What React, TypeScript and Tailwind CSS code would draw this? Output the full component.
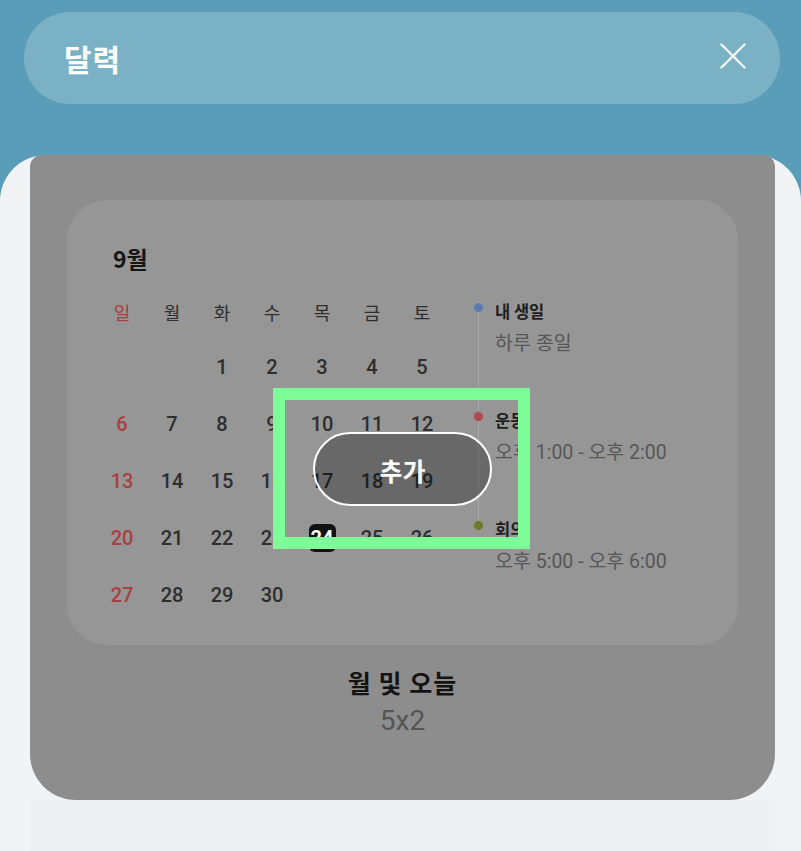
import React from "react";

const font = { fontFamily: '"Noto Sans CJK KR", "Noto Sans", sans-serif' };
const latin = { fontFamily: 'Roboto, "Noto Sans CJK KR", sans-serif' };

const weekdays = ["일", "월", "화", "수", "목", "금", "토"];
const rows: (number | null)[][] = [
  [null, null, 1, 2, 3, 4, 5],
  [6, 7, 8, 9, 10, 11, 12],
  [13, 14, 15, 16, 17, 18, 19],
  [20, 21, 22, 23, 24, 25, 26],
  [27, 28, 29, 30, null, null, null],
];

const events = [
  { title: "내 생일", sub: "하루 종일", dot: "bg-[#5a7bb0]" },
  { title: "운동", sub: "오후 1:00 - 오후 2:00", dot: "bg-[#b04a4a]" },
  { title: "회의", sub: "오후 5:00 - 오후 6:00", dot: "bg-[#6b7a25]" },
];

export default function App() {
  return (
    <div
      className="relative w-[801px] h-[851px] overflow-hidden bg-[#5a9db8] flex flex-col"
      style={font}
    >
      {/* header */}
      <div className="ml-[24px] mr-[21px] mt-[12px] h-[92px] rounded-full bg-[#7ab1c5] flex items-center justify-between pl-[40px] pr-[34px] shrink-0">
        <span className="text-white text-[30px] font-bold leading-none tracking-[1px]">달력</span>
        <svg width="26" height="26" viewBox="0 0 26 26" fill="none" className="mt-[-4px]">
          <path d="M1.5 1.5L24.5 24.5M24.5 1.5L1.5 24.5" stroke="white" strokeWidth="2.2" strokeLinecap="round" />
        </svg>
      </div>

      {/* sheet */}
      <div className="mt-[51px] flex-1 rounded-t-[46px] bg-[#f1f3f5] flex flex-col">
        <div className="ml-[30px] mr-[26px] h-[645px] rounded-t-[12px] rounded-b-[46px] bg-[#8d8d8d] flex flex-col items-center shrink-0">
          {/* widget */}
          <div className="self-start ml-[37px] mt-[45px] w-[671px] h-[445px] rounded-[40px] bg-[#969696] flex">
            <div className="flex flex-col pl-[30px] pt-[44px]">
              <div className="pl-[16px] h-[28px] flex items-center text-[23px] font-bold text-[#151515] leading-none">
                9월
              </div>
              <div className="mt-[15px] grid grid-cols-[repeat(7,50px)]">
                {weekdays.map((w, i) => (
                  <div
                    key={w}
                    className={`h-[51px] flex items-center justify-center text-[18px] ${
                      i === 0 ? "text-[#a94040]" : "text-[#2e2e2e]"
                    }`}
                  >
                    {w}
                  </div>
                ))}
                {rows.flat().map((d, i) => (
                  <div
                    key={i}
                    className={`h-[57px] flex items-center justify-center text-[20px] font-medium ${
                      i % 7 === 0 ? "text-[#a94040]" : "text-[#2e2e2e]"
                    }`}
                    style={latin}
                  >
                    {d === 24 ? (
                      <span className="w-[27px] h-[28px] rounded-[6px] bg-[#111] text-white flex items-center justify-center font-bold">
                        24
                      </span>
                    ) : (
                      d ?? ""
                    )}
                  </div>
                ))}
              </div>
            </div>

            {/* events */}
            <div className="ml-[23px] pt-[101px] flex flex-col">
              {events.map((e, i) => (
                <div key={e.title} className="flex h-[109px]">
                  <div className="w-[16px] flex flex-col items-center">
                    <div className={`mt-[2px] w-[9px] h-[9px] rounded-full shrink-0 ${e.dot}`} />
                    {i < events.length - 1 && <div className="w-px flex-1 bg-[#a8a8a8]" />}
                  </div>
                  <div className="ml-[9px] flex flex-col">
                    <div className="h-[20px] flex items-center text-[16.5px] font-bold text-[#1e1e1e]">{e.title}</div>
                    <div className="mt-[11px] h-[24px] flex items-center text-[19.5px] text-[#575757]" style={latin}>
                      {e.sub}
                    </div>
                  </div>
                </div>
              ))}
            </div>
          </div>

          <div className="mt-[23px] h-[30px] flex items-center text-[25px] font-bold text-[#141414] tracking-[1px]">월 및 오늘</div>
          <div className="mt-[7px] h-[32px] flex items-center text-[28px] text-[#555555]" style={{ fontFamily: "Roboto, sans-serif" }}>
            5x2
          </div>
        </div>
        <div className="flex-1 ml-[30px] mr-[26px] bg-[#eeeff1]" />
      </div>

      {/* overlay: selection frame */}
      <div className="absolute left-[273px] top-[388px] w-[257px] h-[161px] border-[12px] border-[#7dfc98]" />
      <div className="absolute left-[313px] top-[432px] w-[179px] h-[74px] rounded-full bg-black/30 border-2 border-white flex items-center justify-center pt-[4px] text-white text-[25px] font-bold">
        추가
      </div>
    </div>
  );
}
